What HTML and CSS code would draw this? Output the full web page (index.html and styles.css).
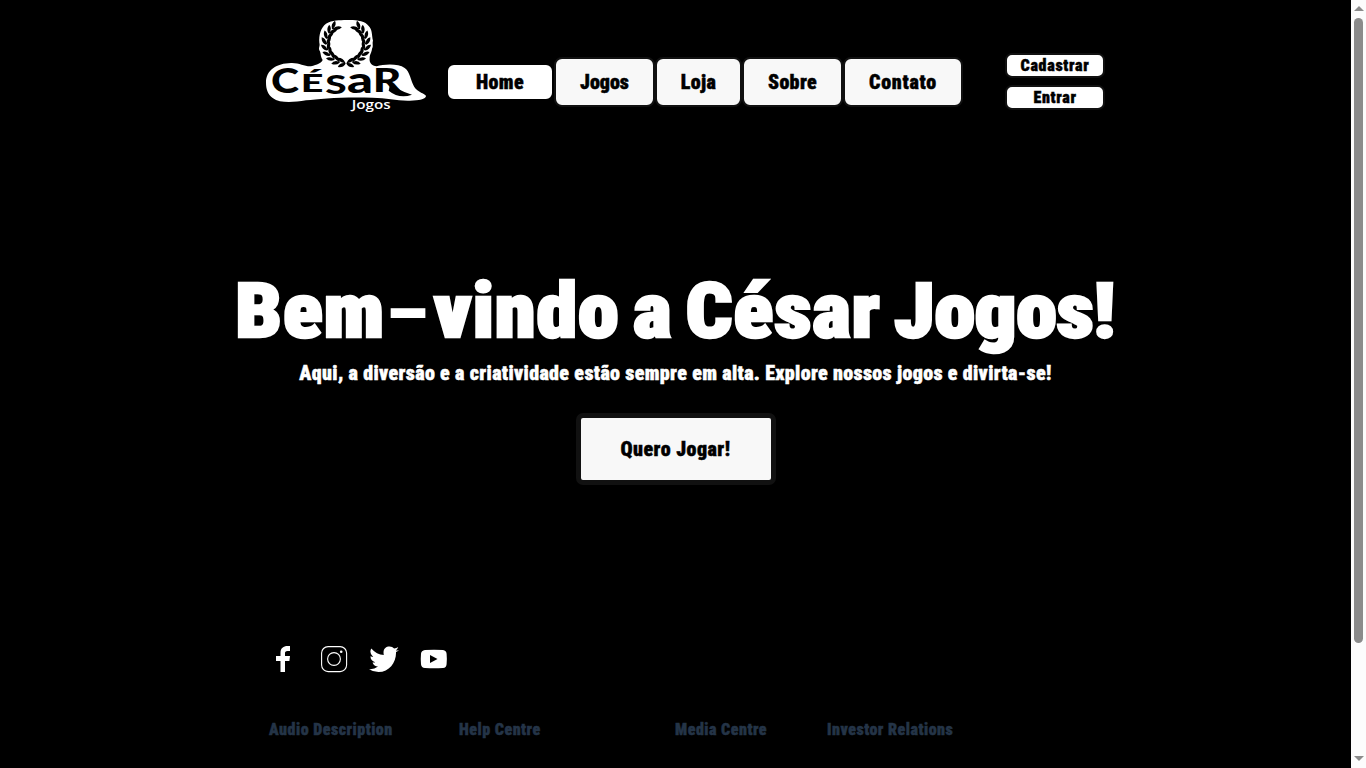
FILE: index.html
```html
<!DOCTYPE html>
<html lang="pt-br">
<head>
<meta charset="utf-8">
<title>César Jogos</title>
<link rel="stylesheet" href="styles.css">
</head>
<body>
<div class="page">
  <header class="header">
    <svg class="logo" viewBox="0 0 540 330" role="img" aria-label="César Jogos">
      <defs>
        <path id="leaf" d="M270 158Q262 142 246 144Q252 158 267 159Q252 159 248 172Q264 174 271 161Z"/>
        <g id="branch">
          <use href="#leaf" transform="rotate(2 270 100)"/>
          <use href="#leaf" transform="rotate(19 270 100)"/>
          <use href="#leaf" transform="rotate(36 270 100)"/>
          <use href="#leaf" transform="rotate(53 270 100)"/>
          <use href="#leaf" transform="rotate(70 270 100)"/>
          <use href="#leaf" transform="rotate(87 270 100)"/>
          <use href="#leaf" transform="rotate(104 270 100)"/>
          <use href="#leaf" transform="rotate(121 270 100)"/>
          <use href="#leaf" transform="rotate(137 270 100)"/>
        </g>
      </defs>
      <path fill="#fff" d="M30 218C30 180 62 160 105 159C130 158 145 170 165 169C184 164 195 160 200 150C192 137 196 130 190 121C187 112 193 108 190 98C188 75 195 52 210 41C229 30 250 31 272 30C300 29 327 32 338 48C350 60 347 77 351 92C348 101 353 107 348 116C347 128 341 132 341 144C339 158 347 168 362 169C384 162 427 160 446 174C462 184 464 213 475 231C484 246 509 252 510 258C510 267 485 273 455 272C420 271 390 264 350 263C260 260 190 266 150 271C109 278 72 280 50 264C35 252 30 237 30 218Z"/>
      <use href="#branch"/>
      <use href="#branch" transform="translate(540 0) scale(-1 1)"/>
      <g class="logo-name">
        <text x="45" y="250" font-size="100" textLength="84" lengthAdjust="spacingAndGlyphs">C</text>
        <text x="134" y="246" font-size="72" textLength="68" lengthAdjust="spacingAndGlyphs">É</text>
        <text x="208" y="252" font-size="78" textLength="64" lengthAdjust="spacingAndGlyphs">S</text>
        <text x="273" y="248" font-size="106" textLength="78" lengthAdjust="spacingAndGlyphs">a</text>
        <text x="350" y="247" font-size="95" textLength="86" lengthAdjust="spacingAndGlyphs">R</text>
      </g>
      <path d="M404 214Q426 244 468 254Q430 268 398 242Z"/>
      <text class="logo-sub" x="287" y="297" textLength="117" lengthAdjust="spacingAndGlyphs">Jogos</text>
    </svg>
    <nav class="nav">
      <a class="nav-item home">Home</a>
      <a class="nav-item jogos">Jogos</a>
      <a class="nav-item loja">Loja</a>
      <a class="nav-item sobre">Sobre</a>
      <a class="nav-item contato">Contato</a>
    </nav>
    <div class="account">
      <a class="account-button">Cadastrar</a>
      <a class="account-button">Entrar</a>
    </div>
  </header>
  <main class="hero">
    <h1>Bem<span class="dash">-</span>vindo a César <span class="last">Jogos!</span></h1>
    <p>Aqui, a diversão e a criatividade estão sempre em alta. Explore nossos jogos e divirta-se!</p>
    <a class="play">Quero Jogar!</a>
  </main>
  <footer class="footer">
    <div class="social">
      <svg width="30" height="30" viewBox="0 0 30 30"><path d="M11.500 28V17H7v-5h4.500V9c0-5 3-7 7-7H21v5h-2.500c-2 0-2.500 1-2.500 2v3h5l-.6 5H16v11z"/></svg>
      <svg width="30" height="30" viewBox="0 0 30 30"><g fill="none" stroke="#fff" stroke-width="1.1"><rect x="2.600" y="2.600" width="25" height="25" rx="6.500"/><circle cx="15" cy="15" r="6.400"/></g><circle cx="22.200" cy="7.800" r="1.300"/></svg>
      <svg width="30" height="30" viewBox="0 0 30 30"><path d="M30 6.200Q28.600 7.300 27 7.900C27.500 18 20.500 28 9.500 28Q4.500 28 0 25.200Q5.200 25.600 9 22.600Q5 22.200 3.500 18.400Q5 18.700 6.200 18.200Q1.400 16.600 1.500 12.200Q2.800 12.900 4.200 12.900Q-.2 9 2.300 4.500Q7.500 10.600 14.800 10.900C13.500 5 17 2.400 20.600 2.500Q23.300 2.600 25.200 4.600Q27.500 4 29.200 3Q28.500 5 26.800 6.500Q28.600 6.500 30 6.200Z"/></svg>
      <svg width="30" height="30" viewBox="0 0 30 30"><path fill-rule="evenodd" d="M6 6Q15 5.300 24 6Q27.300 6.400 27.600 9.800Q28.100 15 27.600 20.200Q27.300 23.600 24 24Q15 24.700 6 24Q2.300 23.600 2 20.200Q1.500 15 2 9.800Q2.300 6.400 6 6ZM11 11v8l7.500-4z"/></svg>
    </div>
    <div class="links">
      <a>Audio Description</a>
      <a>Help Centre</a>
      <a>Media Centre</a>
      <a>Investor Relations</a>
    </div>
  </footer>
</div>
<div class="scrollbar">
  <span class="arrow up"></span>
  <span class="thumb"></span>
  <span class="arrow down"></span>
</div>
</body>
</html>
```
FILE: styles.css
```css
* { box-sizing: border-box; }
body {
  margin: 0;
  height: 768px;
  overflow: hidden;
  display: flex;
  background: #000;
  color: #fff;
  font-family: Roboto, sans-serif;
  font-weight: 900;
  font-stretch: 75%;
  font-size: 20px;
  letter-spacing: 0.36px;
  -webkit-text-stroke: 0.45px currentColor;
}
.page {
  width: 1351px;
  display: flex;
  flex-direction: column;
}
.header {
  height: 271px;
  padding: 10px 0 0 256px;
  display: flex;
  align-items: flex-start;
}
.logo { width: 180px; height: 110px; flex: none; letter-spacing: 0; }
.logo-name {
  fill: #000;
  font-family: Lato, sans-serif;
  font-weight: 900;
  font-stretch: normal;
  -webkit-text-stroke: 9px #000;
}
.logo-sub {
  fill: #fff;
  font: 600 37px "Open Sans", sans-serif;
  -webkit-text-stroke: 0;
}
.nav {
  display: flex;
  align-items: center;
  margin: 47px 0 0 10px;
}
.nav-item {
  height: 50px;
  border: 2px solid #111;
  border-radius: 8px;
  background: #f8f8f8;
  color: #000;
  line-height: 46px;
  text-align: center;
}
.home { width: 108px; height: 38px; line-height: 35px; border-color: #000; background: #fff; }
.jogos { width: 101px; letter-spacing: 0; }
.loja { width: 87px; }
.sobre { width: 101px; }
.contato { width: 120px; letter-spacing: 0.75px; }
.account {
  display: flex;
  flex-direction: column;
  gap: 7px;
  margin: 43px 0 0 42px;
}
.account-button {
  width: 100px;
  height: 25px;
  border: 2px solid #111;
  border-radius: 7px;
  background: #fff;
  color: #000;
  font-size: 16px;
  letter-spacing: 0.7px;
  line-height: 22px;
  text-align: center;
}
.hero {
  height: 369px;
  display: flex;
  flex-direction: column;
  align-items: center;
}
h1 {
  margin: 0;
  font-size: 76px;
  font-weight: 900;
  line-height: 80px;
  white-space: nowrap;
  letter-spacing: 0.8px;
  word-spacing: -6px;
  transform: scaleX(1.083);
  -webkit-text-stroke: 2.5px #fff;
}
.dash {
  display: inline-block;
  margin: 0 6px;
  transform: scale(1.45, 0.8);
}
.last { letter-spacing: -0.3px; }
p { margin: 10px 0 0; line-height: 24px; white-space: nowrap; }
.play {
  width: 200px;
  height: 72px;
  margin-top: 28px;
  border: 5px solid #111;
  border-radius: 7px;
  background: #f8f8f8;
  color: #000;
  letter-spacing: 0.5px;
  line-height: 63px;
  text-align: center;
}
.footer { padding: 4px 0 0 269px; }
.social { display: flex; gap: 20px; fill: #fff; }
.links {
  display: grid;
  grid-template-columns: 190px 216px 152px 200px;
  margin-top: 46px;
  color: #243447;
  font-size: 16px;
  letter-spacing: 0.5px;
  line-height: 20px;
}
.scrollbar {
  width: 15px;
  background: #fcfcfc;
  display: flex;
  flex-direction: column;
  align-items: center;
  padding: 6px 0;
}
.thumb { width: 9px; height: 625px; margin: 7px 0 113px; border-radius: 5px; background: #8b8b8b; }
.arrow { border: 5px solid transparent; border-top: 0; border-bottom: 5px solid #8b8b8b; }
.down { border-bottom: 0; border-top: 5px solid #8b8b8b; }
```
